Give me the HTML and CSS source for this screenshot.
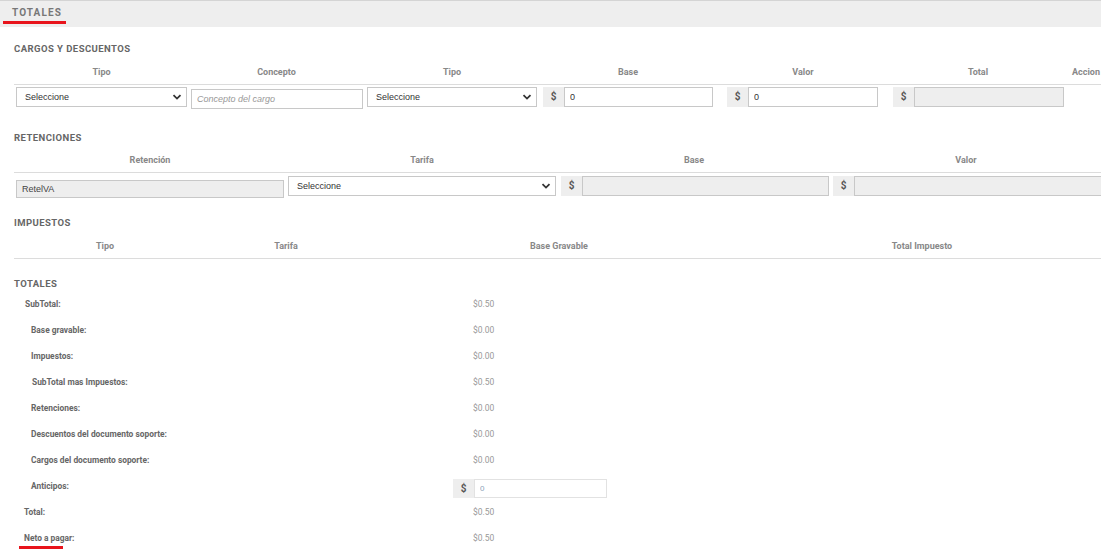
FILE: index.html
```html
<!DOCTYPE html>
<html lang="es">
<head>
  <meta charset="UTF-8" />
  <title>Totales</title>
  <link rel="stylesheet" href="styles.css">
</head>
<body>

  <div class="tabbar">
    <div class="tab">TOTALES</div>
  </div>

  <div class="content">

    <h4 class="section-title t-cargos">CARGOS Y DESCUENTOS</h4>
    <div class="grid cargos head">
      <div>Tipo</div>
      <div>Concepto</div>
      <div>Tipo</div>
      <div>Base</div>
      <div>Valor</div>
      <div>Total</div>
      <div>Accion</div>
    </div>
    <div class="grid cargos row">
      <div class="c1"><div class="select-box"><span>Seleccione</span><svg viewBox="0 0 10 10" width="10" height="10"><path d="M1.5 3.2 L5 6.6 L8.5 3.2" fill="none" stroke="#333" stroke-width="1.8"/></svg></div></div>
      <div class="c2"><input class="field" type="text" placeholder="Concepto del cargo"></div>
      <div class="c3"><div class="select-box"><span>Seleccione</span><svg viewBox="0 0 10 10" width="10" height="10"><path d="M1.5 3.2 L5 6.6 L8.5 3.2" fill="none" stroke="#333" stroke-width="1.8"/></svg></div></div>
      <div class="c4"><div class="input-group"><span class="addon">$</span><input class="field" type="text" value="0"></div></div>
      <div class="c5"><div class="input-group"><span class="addon">$</span><input class="field" type="text" value="0"></div></div>
      <div class="c6"><div class="input-group"><span class="addon">$</span><input class="field" type="text" disabled></div></div>
      <div></div>
    </div>

    <h4 class="section-title t-retenciones">RETENCIONES</h4>
    <div class="grid retenciones head">
      <div>Retención</div>
      <div>Tarifa</div>
      <div>Base</div>
      <div>Valor</div>
    </div>
    <div class="grid retenciones row">
      <div class="r1"><input class="field small" type="text" value="RetelVA" disabled></div>
      <div class="r2"><div class="select-box"><span>Seleccione</span><svg viewBox="0 0 10 10" width="10" height="10"><path d="M1.5 3.2 L5 6.6 L8.5 3.2" fill="none" stroke="#333" stroke-width="1.8"/></svg></div></div>
      <div class="r3"><div class="input-group"><span class="addon">$</span><input class="field" type="text" disabled></div></div>
      <div class="r4"><div class="input-group"><span class="addon">$</span><input class="field" type="text" disabled></div></div>
    </div>

    <h4 class="section-title t-impuestos">IMPUESTOS</h4>
    <div class="grid impuestos head">
      <div>Tipo</div>
      <div>Tarifa</div>
      <div>Base Gravable</div>
      <div>Total Impuesto</div>
    </div>

    <h4 class="section-title t-totales">TOTALES</h4>
    <div class="totals">
      <div class="label l-main">SubTotal:</div><div class="value">$0.50</div>
      <div class="label">Base gravable:</div><div class="value">$0.00</div>
      <div class="label">Impuestos:</div><div class="value">$0.00</div>
      <div class="label l-shift">SubTotal mas Impuestos:</div><div class="value">$0.50</div>
      <div class="label">Retenciones:</div><div class="value">$0.00</div>
      <div class="label">Descuentos del documento soporte:</div><div class="value">$0.00</div>
      <div class="label">Cargos del documento soporte:</div><div class="value">$0.00</div>
      <div class="label">Anticipos:</div>
      <div class="value-input"><div class="input-group"><span class="addon">$</span><input class="field tiny" type="text" value="0"></div></div>
      <div class="label l-top">Total:</div><div class="value">$0.50</div>
      <div class="label l-top neto">Neto a pagar:</div><div class="value">$0.50</div>
    </div>

  </div>

</body>
</html>
```

FILE: styles.css
```css
html, body {
  margin: 0;
  padding: 0;
  background: #fff;
  overflow: hidden;
}
body {
  font-family: Roboto, "Liberation Sans", Arial, sans-serif;
  width: 1101px;
  height: 551px;
}

.tabbar {
  height: 26px;
  background: #eeeeee;
  border-top: 1px solid #d4d4d4;
  padding-left: 3px;
}
.tab {
  display: inline-block;
  height: 20px;
  padding: 0 9px;
  line-height: 24px;
  font-size: 10px;
  font-weight: bold;
  letter-spacing: 1.1px;
  color: #777;
  border-bottom: 3px solid #e8141c;
  width: 45px;
}

.content {
  padding-left: 14px;
}

.section-title {
  margin: 0;
  height: 11px;
  line-height: 12px;
  font-size: 9.5px;
  font-weight: bold;
  letter-spacing: 0.45px;
  color: #666;
}
.t-cargos { padding-top: 16px; }
.t-retenciones { padding-top: 25px; }
.t-impuestos { padding-top: 21px; }
.t-totales { padding-top: 19px; }

.grid {
  display: grid;
}
.cargos {
  grid-template-columns: 175px 175px 176px 176px 174px 176px 40px;
}
.retenciones {
  grid-template-columns: 272px 272px 272px 272px;
}
.impuestos {
  grid-template-columns: 182px 180px 366px 360px;
}

.head {
  padding: 12px 0 6px;
  border-bottom: 1px solid #dcdcdc;
  font-size: 9px;
  font-weight: bold;
  line-height: 12px;
  color: #888;
  text-align: center;
}
.retenciones.head {
  padding-top: 11px;
}

.row {
  padding-top: 2px;
  height: 20px;
}
.retenciones.row {
  padding-top: 3px;
}

.c1 { padding: 0 2px; }
.c2 { padding: 0 1px 0 2px; }
.c3 { padding: 0 3px; }
.c4 { padding: 0 3px; }
.c5 { padding: 0 12px 0 11px; }
.c6 { padding: 0 2px 0 3px; }
.r1 { padding: 1px 2px; }
.r2 { padding: 0 2px; }
.r3 { padding: 0 1px 0 3px; }
.r4 { padding: 0 0 0 3px; }

.select-box {
  height: 18px;
  border: 1px solid #c8c8c8;
  display: flex;
  align-items: center;
  justify-content: space-between;
  padding: 0 4px 0 8px;
  font-family: "Liberation Sans", Arial, sans-serif;
  font-size: 9px;
  color: #333;
  background: #fff;
}
.select-box svg {
  display: block;
}

.field {
  box-sizing: border-box;
  width: 100%;
  height: 20px;
  margin: 0;
  border: 1px solid #c8c8c8;
  padding: 0 5px;
  font-family: "Liberation Sans", Arial, sans-serif;
  font-size: 9px;
  color: #333;
  background: #fff;
  outline: none;
}
.field::placeholder {
  color: #999;
  font-style: italic;
}
.field:disabled {
  background: #eeeeee;
  color: #444;
}
.field.small {
  height: 18px;
}
.field.tiny {
  font-size: 8px;
  color: #8aa0b8;
  border-color: #e2e2e2;
}

.input-group {
  display: flex;
  height: 20px;
}
.addon {
  flex: 0 0 21px;
  background: #eeeeee;
  text-align: center;
  line-height: 20px;
  font-size: 10px;
  font-weight: bold;
  color: #555;
}

.totals {
  display: grid;
  grid-template-columns: 439px 154px;
  grid-auto-rows: 26px;
  align-items: center;
  margin-top: 2px;
}
.totals .label {
  padding-left: 17px;
  font-size: 8.4px;
  font-weight: bold;
  color: #666;
}
.totals .l-main { padding-left: 11px; }
.totals .l-shift { padding-left: 18px; }
.totals .l-top { padding-left: 10px; }
.totals .value {
  padding-left: 20px;
  font-size: 8.5px;
  color: #999;
}
.value-input .input-group {
  height: 19px;
  margin-top: 4px;
}
.value-input .addon {
  line-height: 19px;
}
.value-input .field {
  height: 19px;
}

.neto {
  position: relative;
}
.neto::after {
  content: "";
  position: absolute;
  left: 5px;
  top: 13px;
  width: 44px;
  height: 3px;
  background: #e8141c;
}
```
